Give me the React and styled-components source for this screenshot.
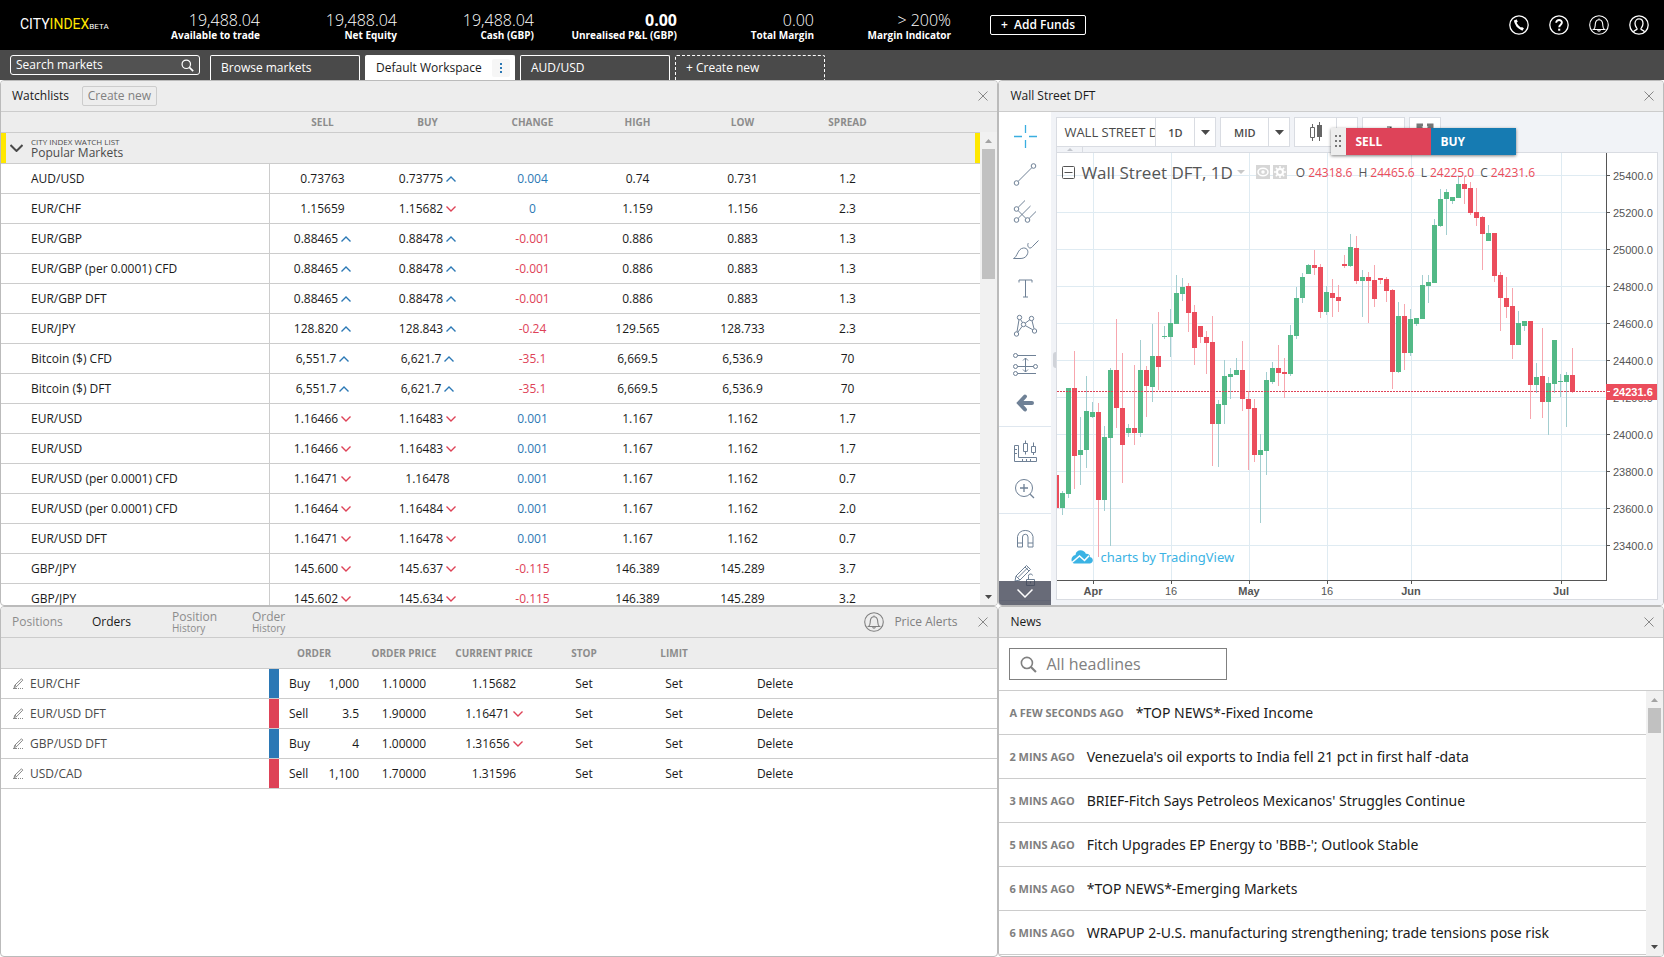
import React from "react";
import styled, { createGlobalStyle, css } from "styled-components";

const GlobalStyle = createGlobalStyle`
  * { box-sizing: border-box; }
  body {
    margin: 0;
    background: #fff;
    color: #1a1a1a;
    font-family: "Open Sans", "Noto Sans", sans-serif;
    font-size: 12px;
  }
  button, input { font: inherit; color: inherit; }
  button { padding: 0; border: 0; background: none; cursor: pointer; }
  a { color: inherit; text-decoration: none; }
`;

const line = "#ccc";
const blue = "#2b78b5";
const red = "#de4257";

/* ---------- page ---------- */

const Page = styled.div`
  display: flex;
  flex-direction: column;
  height: 100vh;
`;

const TopBar = styled.header`
  display: flex;
  flex: none;
  align-items: center;
  height: 50px;
  padding: 0 15px 0 20px;
  background: #000;
  color: #fff;
`;

const Logo = styled.a`
  flex: none;
  width: 103px;
  font-family: Roboto, sans-serif;
  font-size: 14px;
  line-height: 16px;
  color: #fff;
`;
const LogoAccent = styled.span`
  color: #ffe600;
`;
const LogoTag = styled.span`
  font-size: 8px;
`;

const Metrics = styled.dl`
  display: flex;
  margin: 0;
  padding-top: 2px;
`;
const Metric = styled.div`
  display: flex;
  flex-direction: column-reverse;
  width: ${(p) => (p.$wide ? 143 : 137)}px;
  text-align: right;
`;
const MetricLabel = styled.dt`
  font-size: 10px;
  font-weight: 700;
  line-height: 12px;
  white-space: nowrap;
`;
const MetricValue = styled.dd`
  margin: 0;
  font-size: 16px;
  font-weight: ${(p) => (p.$strong ? 700 : 300)};
  line-height: 18px;
`;

const AddFunds = styled.button`
  flex: none;
  width: 96px;
  height: 20px;
  margin-left: 39px;
  border: 1px solid #fff;
  border-radius: 2px;
  color: #fff;
  font-weight: 600;
  line-height: 18px;
`;

const AccountIcons = styled.nav`
  display: flex;
  gap: 20px;
  margin-left: auto;
`;
const RoundIcon = styled.button`
  display: block;
  width: 20px;
  height: 20px;
  color: #fff;
  svg { display: block; }
`;

/* ---------- workspace tabs ---------- */

const WorkspaceBar = styled.nav`
  display: flex;
  flex: none;
  align-items: flex-end;
  gap: 5px;
  height: 30px;
  padding-left: 10px;
  background: #4a4a4a;
  color: #fff;
`;
const MarketSearch = styled.label`
  display: flex;
  align-items: center;
  align-self: center;
  width: 190px;
  height: 20px;
  margin-right: 5px;
  padding: 0 5px;
  border: 1px solid #fff;
  border-radius: 3px;
  background: #525252;
`;
const MarketSearchInput = styled.input`
  flex: 1;
  min-width: 0;
  height: 18px;
  padding: 0 0 2px;
  border: 0;
  outline: 0;
  background: none;
  &::placeholder { color: #fff; opacity: 1; }
`;
const WorkspaceTab = styled.div`
  display: flex;
  align-items: center;
  justify-content: space-between;
  width: 150px;
  height: 25px;
  padding: 0 4px 1px 10px;
  border: 1px ${(p) => (p.$dashed ? "dashed" : "solid")} #fff;
  border-bottom: 0;
  border-radius: 2px 2px 0 0;
  ${(p) => p.$active && css`
    background: #fff;
    color: #1a1a1a;
  `}
`;
const TabMenu = styled.button`
  display: grid;
  place-items: center;
  width: 18px;
  height: 18px;
  border-radius: 2px;
  background: #f6f6f6;
  color: #2b78b5;
`;

/* ---------- panels ---------- */

const Workspace = styled.main`
  display: grid;
  flex: 1;
  grid-template-columns: minmax(0, 3fr) minmax(0, 2fr);
  grid-template-rows: minmax(0, 3fr) minmax(0, 2fr);
  min-height: 0;
`;
const Panel = styled.section`
  display: flex;
  flex-direction: column;
  min-width: 0;
  overflow: hidden;
  border: 1px solid #bbb;
  border-radius: 4px;
  background: #fff;
`;
const PanelHead = styled.div`
  display: flex;
  flex: none;
  align-items: center;
  height: 31px;
  padding: 0 9px 1px 11px;
  border-bottom: 1px solid ${line};
  background: #ededed;
`;
const PanelTitle = styled.h2`
  margin: 0;
  font-size: 12px;
  font-weight: 400;
`;
const CreateList = styled.button`
  width: 75px;
  height: 20px;
  margin-left: 13px;
  border: 1px solid #ccc;
  border-radius: 2px;
  color: #808080;
  line-height: 18px;
`;
const CloseButton = styled.button`
  display: grid;
  place-items: center;
  width: 10px;
  height: 10px;
  margin-left: ${(p) => (p.$tight ? "21px" : "auto")};
  color: #888;
`;
const PanelBody = styled.div`
  display: flex;
  flex: 1;
  min-height: 0;
`;
const TableArea = styled.div`
  flex: 1;
  min-width: 0;
  overflow: hidden;
`;

/* ---------- tables ---------- */

const DataTable = styled.table`
  width: 100%;
  table-layout: fixed;
  border-spacing: 0;
`;
const Col = styled.col`
  width: ${(p) => p.$w}px;
`;
const HeadCell = styled.th`
  height: ${(p) => p.$h || 21}px;
  padding: 0 ${(p) => p.$padRight || 0}px 0 0;
  border-bottom: 1px solid ${line};
  background: #ededed;
  color: #8c8c8c;
  font-size: 10px;
  font-weight: 700;
  text-align: center;
  white-space: nowrap;
`;
const Cell = styled.td`
  height: 30px;
  padding: 0;
  border-bottom: 1px solid ${line};
  text-align: center;
  white-space: nowrap;
  color: ${(p) => p.$color || "inherit"};
`;
const NameCell = styled(Cell).attrs({ as: "th", scope: "row" })`
  padding-left: ${(p) => p.$indent}px;
  border-right: ${(p) => (p.$divider ? `1px solid ${line}` : "0")};
  font-weight: 400;
  text-align: left;
`;
const Price = styled.span`
  display: inline-flex;
  align-items: center;
  gap: 3px;
`;
const GroupCell = styled.td`
  height: 31px;
  padding: 0;
  border-bottom: 1px solid ${line};
  background: #ededed;
`;
const GroupButton = styled.button`
  display: flex;
  align-items: center;
  gap: 8px;
  width: 100%;
  height: 30px;
  padding-left: 4px;
  border: solid #ffe800;
  border-width: 0 5px;
  color: #4a4a4a;
  text-align: left;
`;
const GroupText = styled.span`
  display: flex;
  flex-direction: column;
  line-height: 14px;
`;
const GroupKind = styled.small`
  font-size: 8px;
  line-height: 9px;
`;

/* ---------- scrollbar ---------- */

const ScrollTrack = styled.div`
  display: flex;
  flex: none;
  flex-direction: column;
  align-items: center;
  width: 17px;
  background: #f1f1f1;
`;
const ScrollCap = styled.div`
  flex: none;
  width: 17px;
  height: 20px;
  background: #ededed;
`;
const ScrollArrow = styled.div`
  display: grid;
  flex: none;
  place-items: center;
  width: 17px;
  height: 17px;
`;
const ScrollThumb = styled.div`
  flex: none;
  width: 13px;
  height: ${(p) => p.$h}px;
  margin-bottom: auto;
  background: #c1c1c1;
`;

/* ---------- orders ---------- */

const OrderTabs = styled.div`
  display: flex;
`;
const OrderTab = styled.button`
  display: flex;
  flex-direction: column;
  justify-content: center;
  width: 80px;
  height: 29px;
  color: ${(p) => (p.$active ? "#1a1a1a" : "#8c8c8c")};
  line-height: 13px;
  text-align: left;
`;
const TabSub = styled.small`
  font-size: 10px;
  line-height: 11px;
`;
const PriceAlerts = styled.button`
  display: flex;
  align-items: center;
  gap: 10px;
  margin-left: auto;
  color: #808080;
`;
const OrderName = styled.span`
  display: flex;
  align-items: center;
  gap: 6px;
  color: #4a4a4a;
`;
const SideCell = styled(Cell)`
  background: ${(p) => p.$bg};
`;
const OrderType = styled(Cell)`
  padding-left: 10px;
  text-align: left;
`;
const OrderSize = styled(Cell)`
  text-align: right;
`;

/* ---------- chart ---------- */

const ToolColumn = styled.div`
  position: relative;
  flex: none;
  width: 52px;
  overflow: hidden;
  background: #fff;
`;
const ToolGroup = styled.div`
  display: flex;
  flex-direction: column;
  align-items: center;
  padding: 5px 0;
  border-bottom: 1px solid #dfe7ef;
`;
const Tool = styled.button`
  display: grid;
  place-items: center;
  width: 38px;
  height: 38px;
  color: ${(p) => (p.$active ? "#3aaee0" : "#6f8196")};
`;
const ToolMore = styled.button`
  position: absolute;
  right: 0;
  bottom: 0;
  left: 0;
  display: grid;
  place-items: center;
  height: 24px;
  background: rgba(66, 70, 86, 0.8);
  color: #fff;
`;
const ChartArea = styled.div`
  position: relative;
  display: flex;
  flex: 1;
  flex-direction: column;
  min-width: 0;
  padding: 5px;
  background: #f1f3f7;
`;
const ChartToolbar = styled.div`
  display: flex;
  flex: none;
  gap: 4px;
`;
const ToolbarGroup = styled.div`
  display: flex;
  height: 30px;
  border: 1px solid #d9dce2;
  background: #fff;
  color: #4a4a4a;
`;
const SymbolInput = styled.input`
  width: 98px;
  padding: 0 0 0 7px;
  border: 0;
  outline: 0;
  background: none;
  font-size: 13px;
`;
const ToolbarButton = styled.button`
  display: grid;
  place-items: center;
  width: ${(p) => p.$w}px;
  border-left: ${(p) => (p.$divider ? "1px solid #d9dce2" : "0")};
  font-size: 11px;
  font-weight: 600;
`;
const ToolbarFold = styled.button`
  display: grid;
  flex: none;
  place-items: center;
  width: 27px;
  height: 5px;
  border: solid #d9dce2;
  border-width: 0 1px;
`;
const TradeTicket = styled.div`
  position: absolute;
  top: 16px;
  left: 280px;
  display: flex;
  width: 185px;
  height: 27px;
  background: #ededed;
  box-shadow: 0 1px 3px rgba(0, 0, 0, 0.5);
`;
const DragHandle = styled.div`
  display: grid;
  place-items: center;
  width: 15px;
`;
const TradeButton = styled.button`
  flex: 1;
  padding-left: 9px;
  background: ${(p) => p.$bg};
  color: #fff;
  font-weight: 700;
  text-align: left;
`;
const ChartBox = styled.div`
  position: relative;
  flex: 1;
  min-height: 0;
  overflow: hidden;
  border: 1px solid #d9dce2;
  background: #fff;
`;
const ChartSvg = styled.svg`
  display: block;
  width: 100%;
  height: 100%;
  text {
    font-family: "Liberation Sans", Arial, sans-serif;
    font-size: 11px;
    fill: #555;
  }
`;
const LastPrice = styled.text`
  && { fill: #fff; }
`;
const Legend = styled.div`
  position: absolute;
  top: 7px;
  left: 5px;
  display: flex;
  align-items: center;
  height: 24px;
  color: #555;
`;
const LegendTitle = styled.button`
  display: flex;
  align-items: center;
  gap: 4px;
  margin: 0 11px 0 6px;
  font-size: 17px;
  font-weight: 500;
  white-space: nowrap;
`;
const LegendIcon = styled.button`
  display: grid;
  place-items: center;
  width: 14px;
  height: 14px;
  margin-right: 3px;
  background: #d6d6d6;
  color: #fff;
`;
const Ohlc = styled.dl`
  display: flex;
  gap: 6px;
  margin: 0 0 0 6px;
`;
const OhlcItem = styled.div`
  display: flex;
  gap: 3px;
  dt, dd { margin: 0; }
  dd { color: #eb4d5c; }
`;
const Credit = styled.a`
  position: absolute;
  top: 393px;
  left: 14px;
  display: flex;
  align-items: center;
  gap: 7px;
  height: 22px;
  color: #3bb3e4;
  font-family: "Noto Sans", "Open Sans", sans-serif;
  font-size: 13px;
`;
const SideHandle = styled.div`
  position: absolute;
  top: 240px;
  left: 2px;
  width: 3px;
  height: 16px;
  border-radius: 8px 0 0 8px;
  background: #d0d3d9;
`;

/* ---------- news ---------- */

const NewsSearchBar = styled.div`
  flex: none;
  height: 53px;
  padding: 10px;
  border-bottom: 1px solid ${line};
`;
const NewsSearch = styled.label`
  display: flex;
  align-items: center;
  gap: 9px;
  width: 218px;
  height: 32px;
  padding-left: 10px;
  border: 1px solid #808080;
  color: #808080;
`;
const NewsInput = styled.input`
  flex: 1;
  min-width: 0;
  padding: 0;
  border: 0;
  outline: 0;
  font-size: 16px;
  &::placeholder { color: #808080; opacity: 1; }
`;
const NewsList = styled.ul`
  flex: 1;
  min-width: 0;
  margin: 0;
  padding: 0;
  overflow: hidden;
  list-style: none;
`;
const NewsItem = styled.li`
  display: flex;
  align-items: center;
  gap: 12px;
  height: 44px;
  padding-left: 10px;
  border-bottom: 1px solid ${line};
  white-space: nowrap;
`;
const NewsTime = styled.time`
  color: #808080;
  font-size: 11px;
  font-weight: 700;
`;
const NewsLink = styled.a`
  font-family: "Noto Sans", "Open Sans", sans-serif;
  font-size: 14px;
`;

/* ---------- data ---------- */

const metrics = [
  ["19,488.04", "Available to trade"],
  ["19,488.04", "Net Equity"],
  ["19,488.04", "Cash (GBP)"],
  ["0.00", "Unrealised P&L (GBP)", true],
  ["0.00", "Total Margin"],
  ["> 200%", "Margin Indicator"],
];

const markets = [
  ["AUD/USD", "0.73763", "", "0.73775", "u", "0.004", "0.74", "0.731", "1.2"],
  ["EUR/CHF", "1.15659", "", "1.15682", "d", "0", "1.159", "1.156", "2.3"],
  ["EUR/GBP", "0.88465", "u", "0.88478", "u", "-0.001", "0.886", "0.883", "1.3"],
  ["EUR/GBP (per 0.0001) CFD", "0.88465", "u", "0.88478", "u", "-0.001", "0.886", "0.883", "1.3"],
  ["EUR/GBP DFT", "0.88465", "u", "0.88478", "u", "-0.001", "0.886", "0.883", "1.3"],
  ["EUR/JPY", "128.820", "u", "128.843", "u", "-0.24", "129.565", "128.733", "2.3"],
  ["Bitcoin ($) CFD", "6,551.7", "u", "6,621.7", "u", "-35.1", "6,669.5", "6,536.9", "70"],
  ["Bitcoin ($) DFT", "6,551.7", "u", "6,621.7", "u", "-35.1", "6,669.5", "6,536.9", "70"],
  ["EUR/USD", "1.16466", "d", "1.16483", "d", "0.001", "1.167", "1.162", "1.7"],
  ["EUR/USD", "1.16466", "d", "1.16483", "d", "0.001", "1.167", "1.162", "1.7"],
  ["EUR/USD (per 0.0001) CFD", "1.16471", "d", "1.16478", "", "0.001", "1.167", "1.162", "0.7"],
  ["EUR/USD (per 0.0001) CFD", "1.16464", "d", "1.16484", "d", "0.001", "1.167", "1.162", "2.0"],
  ["EUR/USD DFT", "1.16471", "d", "1.16478", "d", "0.001", "1.167", "1.162", "0.7"],
  ["GBP/JPY", "145.600", "d", "145.637", "d", "-0.115", "146.389", "145.289", "3.7"],
  ["GBP/JPY", "145.602", "d", "145.634", "d", "-0.115", "146.389", "145.289", "3.2"],
];

const orders = [
  ["EUR/CHF", "Buy", "1,000", "1.10000", "1.15682", ""],
  ["EUR/USD DFT", "Sell", "3.5", "1.90000", "1.16471", "d"],
  ["GBP/USD DFT", "Buy", "4", "1.00000", "1.31656", "d"],
  ["USD/CAD", "Sell", "1,100", "1.70000", "1.31596", ""],
];

const news = [
  ["A FEW SECONDS AGO", "*TOP NEWS*-Fixed Income"],
  ["2 MINS AGO", "Venezuela's oil exports to India fell 21 pct in first half -data"],
  ["3 MINS AGO", "BRIEF-Fitch Says Petroleos Mexicanos' Struggles Continue"],
  ["5 MINS AGO", "Fitch Upgrades EP Energy to 'BBB-'; Outlook Stable"],
  ["6 MINS AGO", "*TOP NEWS*-Emerging Markets"],
  ["6 MINS AGO", "WRAPUP 2-U.S. manufacturing strengthening; trade tensions pose risk"],
];

/* One candle per trading day: direction, high, body top, body bottom, low. */
const candles = [
  ["r", 475, 475, 508, 508], ["g", 491, 493, 508, 515], ["g", 388, 388, 494, 498],
  ["r", 351, 388, 456, 489], ["g", 417, 450, 455, 485], ["g", 376, 411, 450, 468],
  ["g", 402, 412, 417, 418], ["r", 403, 412, 500, 557], ["g", 426, 437, 500, 511],
  ["g", 368, 370, 438, 546], ["r", 319, 370, 408, 428], ["r", 353, 408, 445, 483],
  ["g", 424, 428, 433, 437], ["r", 365, 428, 433, 445], ["g", 340, 370, 433, 437],
  ["r", 366, 370, 386, 417], ["g", 324, 356, 387, 402], ["r", 312, 356, 367, 390],
  ["g", 326, 336, 337, 339], ["g", 309, 323, 337, 357], ["g", 275, 293, 324, 324],
  ["g", 278, 287, 294, 301], ["r", 283, 286, 313, 332], ["r", 305, 312, 348, 365],
  ["r", 326, 326, 337, 343], ["r", 331, 337, 343, 374], ["r", 316, 342, 424, 466],
  ["g", 400, 404, 424, 467], ["g", 360, 376, 405, 424], ["g", 368, 374, 377, 399],
  ["g", 358, 370, 375, 375], ["r", 341, 370, 399, 411], ["r", 391, 399, 409, 470],
  ["r", 399, 408, 455, 462], ["g", 434, 450, 455, 523], ["g", 372, 380, 451, 475],
  ["g", 362, 368, 382, 384], ["r", 345, 368, 373, 386], ["r", 358, 372, 374, 398],
  ["g", 325, 335, 374, 376], ["g", 287, 298, 336, 339], ["g", 273, 277, 298, 303],
  ["g", 264, 265, 274, 274], ["r", 250, 265, 268, 275], ["r", 264, 267, 312, 318],
  ["g", 286, 292, 312, 315], ["r", 279, 293, 298, 317], ["r", 285, 297, 301, 312],
  ["r", 255, 264, 266, 268], ["g", 234, 247, 266, 267], ["r", 236, 248, 281, 284],
  ["g", 270, 277, 281, 317], ["r", 272, 277, 281, 323], ["r", 265, 280, 299, 307],
  ["r", 278, 278, 280, 284], ["r", 277, 279, 291, 302], ["r", 289, 290, 372, 389],
  ["g", 302, 316, 372, 373], ["r", 304, 316, 353, 370], ["g", 309, 319, 353, 356],
  ["g", 318, 318, 324, 326], ["g", 275, 285, 319, 319], ["g", 275, 282, 286, 303],
  ["g", 219, 225, 283, 283], ["g", 189, 199, 226, 227], ["g", 189, 192, 199, 235],
  ["g", 197, 197, 201, 204], ["g", 176, 184, 198, 198], ["r", 176, 184, 189, 204],
  ["r", 182, 188, 213, 215], ["r", 188, 212, 218, 226], ["r", 216, 217, 234, 270],
  ["g", 225, 233, 241, 241], ["r", 233, 233, 276, 282], ["r", 272, 275, 298, 331],
  ["r", 277, 298, 307, 318], ["r", 288, 306, 345, 359], ["g", 311, 323, 345, 345],
  ["g", 321, 321, 326, 331], ["r", 321, 321, 385, 419], ["g", 363, 377, 385, 393],
  ["r", 328, 376, 402, 418], ["g", 377, 383, 402, 435], ["g", 340, 340, 384, 393],
  ["g", 374, 381, 382, 397], ["g", 372, 375, 382, 427], ["r", 348, 375, 392, 393],
];
const CHART_TOP = 153;

const dates = [
  [36, "Apr", true], [114, "16"], [192, "May", true],
  [270, "16"], [354, "Jun", true], [504, "Jul", true],
];
const prices = Array.from({ length: 11 }, (_, i) => (25400 - i * 200).toFixed(1));

/* ---------- icons ---------- */

const Icon = ({ w, h = w, box, sw = 1, children, ...rest }) => (
  <svg width={w} height={h} viewBox={box || `0 0 ${w} ${h}`} fill="none" stroke="currentColor" strokeWidth={sw} aria-hidden="true" {...rest}>
    {children}
  </svg>
);

const Arrow = ({ dir }) =>
  dir ? (
    <Icon w={10} h={6} sw={1.4} color={dir === "u" ? blue : red}>
      <path d={dir === "u" ? "M.5 5.5 5 1l4.5 4.5" : "M.5.5 5 5 9.5.5"} />
    </Icon>
  ) : null;

const CloseIcon = () => (
  <Icon w={10}><path d="M.5.5l9 9M9.5.5l-9 9" /></Icon>
);

const SearchIcon = ({ size }) => (
  <Icon w={size} box="0 0 16 16" sw={1.5}>
    <circle cx="6.5" cy="6.5" r="5.2" />
    <path d="M10.3 10.3 15 15" strokeWidth="2" />
  </Icon>
);

const BellIcon = () => (
  <Icon w={20} sw={1.1}>
    <circle cx="10" cy="10" r="9.3" />
    <path d="M4.5 14.5c2-1.5 1.6-3 1.8-5.5.2-2.6 1.5-4.3 3.7-4.3s3.5 1.700 3.700 4.300c.2 2.500-.2 4 1.800 5.500zM8.700 15c.2 1.500 2.400 1.500 2.600 0M10 3.500v1" />
  </Icon>
);

const Triangle = ({ up, w = 9, h = 5, color }) => (
  <svg width={w} height={h} viewBox="0 0 10 6" preserveAspectRatio="none" aria-hidden="true">
    <path d={up ? "M0 6 5 0l5 6z" : "M0 0h10L5 6z"} fill={color} />
  </svg>
);

const EditIcon = () => (
  <Icon w={11} h={11} color="#888" sw={1}>
    <path d="M1 9.5 2 7 8.5.8l1.300 1.300L3.500 8.700zM2 7l1.500 1.700" />
    <path d="M0 10.500h10" strokeDasharray="4 1 1 1 1 1" />
  </Icon>
);

const tools = {
  Crosshair: <path d="M12.500 1v8M12.500 16v8M1 12.500h8M16 12.500h8" strokeWidth="1.300" />,
  "Trend line": <><circle cx="3.500" cy="21" r="2.300" /><circle cx="20.500" cy="4" r="2.300" /><path d="M5.200 19.300 18.800 5.700" /></>,
  Pitchfork: <><circle cx="3.500" cy="9" r="2.300" /><circle cx="3.500" cy="20" r="2.300" /><circle cx="14.500" cy="20" r="2.300" /><path d="M5.200 7.300 12 .5M5.200 18.300 17.500 6M16.200 18.300 23 11.500M5.200 10.700l7.600 7.600" /></>,
  Brush: <><path d="M.5 20.500c4-1.500 4-10 10-10.500 4-.2 5.500 3.500 3.500 7-1.500 3-4.500 3.500-7 3.500z" /><path d="M15.500 5c-1.500 1.500-.5 5 1.500 5 1.500 0 2-1 3-2l5.500-5.500" /></>,
  Text: <path d="M6 6.500V4h13v2.500M12.500 4v17M10 21h5" />,
  Patterns: <><circle cx="6.500" cy="3.500" r="2.200" /><circle cx="18.500" cy="4.500" r="2.200" /><circle cx="10.500" cy="10.500" r="2.200" /><circle cx="3.500" cy="20" r="2.200" /><circle cx="21.500" cy="17" r="2.200" /><path d="M6 5.700 4 17.800M7.500 5.500l2 3M12.200 9.200l4.700-3.500M9.200 12.300l-4.400 6M12.500 11.700l7.200 4M19 6.700l2 8" /></>,
  "Forecast range": <><circle cx="2.500" cy="3.500" r="2" /><circle cx="2.500" cy="14.500" r="2" /><circle cx="22.500" cy="14.500" r="2" /><circle cx="2.500" cy="21.500" r="2" /><path d="M4.500 3.500H23M4.500 14.500h16M4.500 21.500H23M12.500 6v14M10 8.500 12.500 6 15 8.500M10 17.500l2.500 2.500 2.500-2.500" /></>,
  Back: <path d="M12 6.500 6 13l6 6.500M6.500 13h12.500" strokeWidth="4" strokeLinecap="round" />,
  Measure: <><path d="M1.500 6.500h4v12h18v4h-22zM1.500 10.500H4M1.500 14.500H4M9.500 20v2M13.500 20v2M17.500 20v2M10.500 4.500h4v8h-4zM12.500 1.500v3M12.500 12.500v3M18.500 7.500h4v6h-4zM20.500 3.500v4M20.500 13.500V16" /></>,
  Zoom: <><circle cx="11" cy="11" r="8.500" /><path d="M17.200 17.200 21 21M7 11h8M11 7v8" strokeWidth="1.300" /></>,
  Magnet: <path d="M4.500 21V10.500a8 8 0 0 1 15.500 0V21h-5V11a2.700 2.700 0 0 0-5.500 0v10zM4.500 17h5M15 17h5" />,
  "Lock drawings": <><path d="m2 17 1-5L13.500 1.500l4 4L7 16zM3 12l4 4M5 13.500 15 3.500M12 3l4 4" /><path d="M13.500 15.500h8v6h-8zM15.500 15.500v-3a2 2 0 0 1 4-1M17.500 17.500v2" /></>,
};
const toolGroups = [
  ["Crosshair", "Trend line", "Pitchfork", "Brush", "Text", "Patterns", "Forecast range", "Back"],
  ["Measure", "Zoom"],
  ["Magnet", "Lock drawings"],
];

const Scrollbar = ({ cap, thumb }) => (
  <ScrollTrack aria-hidden="true">
    {cap && <ScrollCap />}
    <ScrollArrow><Triangle up w={7} h={4} color="#a3a3a3" /></ScrollArrow>
    <ScrollThumb $h={thumb} />
    <ScrollArrow><Triangle w={7} h={4} color="#4a4a4a" /></ScrollArrow>
  </ScrollTrack>
);

/* ---------- sections ---------- */

function Header() {
  return (
    <TopBar>
      <Logo href="#">CITY<LogoAccent>INDEX</LogoAccent><LogoTag>BETA</LogoTag></Logo>
      <Metrics>
        {metrics.map(([value, label, strong]) => (
          <Metric key={label} $wide={strong}>
            <MetricLabel>{label}</MetricLabel>
            <MetricValue $strong={strong}>{value}</MetricValue>
          </Metric>
        ))}
      </Metrics>
      <AddFunds>+&nbsp; Add Funds</AddFunds>
      <AccountIcons>
        <RoundIcon aria-label="Call us">
          <Icon w={20} sw={1.3}>
            <circle cx="10" cy="10" r="9.2" />
            <path d="M6.500 5.500c-.8 3.500 3.500 8.300 7.300 8.500" strokeWidth="2.200" />
            <path d="M6.200 5l1.300 2.500M12 13.200l2.200 1.300" strokeWidth="3" />
          </Icon>
        </RoundIcon>
        <RoundIcon aria-label="Help">
          <Icon w={20} sw={1.3}>
            <circle cx="10" cy="10" r="9.2" />
            <path d="M7.200 7.800c0-3.800 5.800-3.500 5.700-.2 0 2-2.700 2.200-2.700 4.600" strokeWidth="1.900" />
            <path d="M10.200 13.700v2" strokeWidth="2.100" />
          </Icon>
        </RoundIcon>
        <RoundIcon aria-label="Notifications"><BellIcon /></RoundIcon>
        <RoundIcon aria-label="Account">
          <Icon w={20} sw={1.3}>
            <circle cx="10" cy="10" r="9.2" />
            <path d="M4.500 16.800c.5-1.500 3.300-1.800 3.600-2.800.2-.8-2.100-2.200-2.100-5.400 0-6.200 8-6.200 8 0 0 3.200-2.300 4.600-2.100 5.400.3 1 3.100 1.300 3.600 2.800" />
          </Icon>
        </RoundIcon>
      </AccountIcons>
    </TopBar>
  );
}

function Tabs() {
  return (
    <WorkspaceBar>
      <MarketSearch>
        <MarketSearchInput placeholder="Search markets" aria-label="Search markets" />
        <SearchIcon size={13} />
      </MarketSearch>
      <WorkspaceTab as="a" href="#">Browse markets</WorkspaceTab>
      <WorkspaceTab $active>
        <a href="#">Default Workspace</a>
        <TabMenu aria-label="Workspace menu">
          <svg width="2" height="10" fill="currentColor"><path d="M0 0h2v2H0zM0 4h2v2H0zM0 8h2v2H0z" /></svg>
        </TabMenu>
      </WorkspaceTab>
      <WorkspaceTab as="a" href="#">AUD/USD</WorkspaceTab>
      <WorkspaceTab as="a" href="#" $dashed>+ Create new</WorkspaceTab>
    </WorkspaceBar>
  );
}

function Watchlists() {
  return (
    <Panel>
      <PanelHead>
        <PanelTitle>Watchlists</PanelTitle>
        <CreateList>Create new</CreateList>
        <CloseButton aria-label="Close Watchlists"><CloseIcon /></CloseButton>
      </PanelHead>
      <PanelBody>
        <TableArea>
          <DataTable>
            <colgroup>
              <Col $w={269} />
              {[1, 2, 3, 4, 5, 6].map((n) => <Col key={n} $w={105} />)}
              <col />
            </colgroup>
            <thead>
              <tr>
                {["", "SELL", "BUY", "CHANGE", "HIGH", "LOW", "SPREAD", ""].map((t, i) => (
                  <HeadCell key={i}>{t}</HeadCell>
                ))}
              </tr>
            </thead>
            <tbody>
              <tr>
                <GroupCell colSpan={8}>
                  <GroupButton>
                    <Icon w={13} h={8} sw={2}><path d="M.5 1l6 6 6-6" /></Icon>
                    <GroupText><GroupKind>CITY INDEX WATCH LIST</GroupKind>Popular Markets</GroupText>
                  </GroupButton>
                </GroupCell>
              </tr>
              {markets.map(([name, sell, sd, buy, bd, change, high, low, spread], i) => (
                <tr key={i}>
                  <NameCell $indent={30} $divider>{name}</NameCell>
                  <Cell><Price>{sell}<Arrow dir={sd} /></Price></Cell>
                  <Cell><Price>{buy}<Arrow dir={bd} /></Price></Cell>
                  <Cell $color={change.startsWith("-") ? red : blue}>{change}</Cell>
                  <Cell>{high}</Cell>
                  <Cell>{low}</Cell>
                  <Cell>{spread}</Cell>
                  <Cell />
                </tr>
              ))}
            </tbody>
          </DataTable>
        </TableArea>
        <Scrollbar cap thumb={130} />
      </PanelBody>
    </Panel>
  );
}

function Chart() {
  return (
    <ChartSvg role="img" aria-label="Wall Street DFT daily candles">
      <g stroke="#dfebf2" shapeRendering="crispEdges">
        {dates.map(([x]) => <path key={x} d={`M${x + 0.5} 0V427`} />)}
        {prices.map((p, i) => <path key={p} d={`M0 ${22.5 + i * 37}H549`} />)}
      </g>
      <g shapeRendering="crispEdges">
        {candles.map(([c, high, top, bottom, low], i) => {
          const x = i * 6 - 1;
          return (
            <g key={i}>
              <rect x={x} y={high - CHART_TOP} width="1" height={low - high} fill={c === "g" ? "#a3ced0" : "#f7a6ae"} />
              <rect x={x - 2} y={top - CHART_TOP} width="5" height={bottom - top} fill={c === "g" ? "#53b987" : "#eb4d5c"} />
            </g>
          );
        })}
      </g>
      <path d="M0 238.500H549" stroke={red} strokeDasharray="2 1" shapeRendering="crispEdges" />
      <path d="M549.500 0V427.500M0 427.500H550" stroke="#555" shapeRendering="crispEdges" />
      {dates.map(([x, label, bold]) => (
        <g key={x}>
          <path d={`M${x + 0.5} 428v3`} stroke="#555" shapeRendering="crispEdges" />
          <text x={x} y="442" textAnchor="middle" fontWeight={bold ? 700 : 400}>{label}</text>
        </g>
      ))}
      {prices.map((p, i) => (
        <g key={p}>
          <path d={`M550 ${22.5 + i * 37}h3`} stroke="#555" shapeRendering="crispEdges" />
          <text x="556" y={27 + i * 37}>{p}</text>
        </g>
      ))}
      <rect x="549" y="231" width="51" height="16" fill="#eb4d5c" />
      <path d="M550 238.500h3" stroke="#fff" />
      <LastPrice x="556" y="243" fontWeight="700">24231.6</LastPrice>
    </ChartSvg>
  );
}

function ChartPanel() {
  return (
    <Panel>
      <PanelHead>
        <PanelTitle>Wall Street DFT</PanelTitle>
        <CloseButton aria-label="Close chart"><CloseIcon /></CloseButton>
      </PanelHead>
      <PanelBody>
        <ToolColumn>
          {toolGroups.map((names) => (
            <ToolGroup key={names[0]}>
              {names.map((n) => (
                <Tool key={n} aria-label={n} $active={n === "Crosshair"}>
                  <Icon w={25} overflow="visible">{tools[n]}</Icon>
                </Tool>
              ))}
            </ToolGroup>
          ))}
          <ToolMore aria-label="More tools">
            <Icon w={16} h={9} sw={1.5}><path d="M.5.5 8 8 15.500.5" /></Icon>
          </ToolMore>
        </ToolColumn>
        <ChartArea>
          <ChartToolbar>
            <ToolbarGroup>
              <SymbolInput defaultValue="WALL STREET DFT" aria-label="Symbol" />
              <ToolbarButton $w={39} $divider>1D</ToolbarButton>
              <ToolbarButton $w={21} $divider aria-label="Change interval"><Triangle color="#4a4a4a" /></ToolbarButton>
            </ToolbarGroup>
            <ToolbarGroup>
              <ToolbarButton $w={47}>MID</ToolbarButton>
              <ToolbarButton $w={21} $divider aria-label="Change price type"><Triangle color="#4a4a4a" /></ToolbarButton>
            </ToolbarGroup>
            <ToolbarGroup>
              <ToolbarButton $w={41} aria-label="Chart style">
                <Icon w={14} h={20} color="#666"><path d="M1.500 5.500h4v10h-4zM3.500 2v3.500M3.500 15.500V19M10.500 0v19" /><path d="M8 3h5v12H8z" fill="currentColor" stroke="none" /></Icon>
              </ToolbarButton>
              <ToolbarButton $w={21} $divider aria-label="Change chart style" />
            </ToolbarGroup>
            <ToolbarGroup>
              <ToolbarButton $w={41} aria-label="Indicators">
                <Icon w={20} h={14} sw={1.2}><path d="M1 13 7 7l4 4 6-9M13 2h4v4" /></Icon>
              </ToolbarButton>
            </ToolbarGroup>
            <ToolbarGroup>
              <ToolbarButton $w={30} aria-label="Full screen">
                <Icon w={18} h={18} sw={3} color="#777"><path d="M2 7V2h5M11 2h5v5M16 11v5h-5M7 16H2v-5M2 2l4 4M16 2l-4 4M2 16l4-4M16 16l-4-4" /></Icon>
              </ToolbarButton>
            </ToolbarGroup>
          </ChartToolbar>
          <ToolbarFold aria-label="Hide toolbar"><Triangle up w={6} h={3} color="#c4c7ce" /></ToolbarFold>
          <ChartBox>
            <Chart />
            <Legend>
              <Icon w={13}><rect x=".5" y=".5" width="12" height="12" rx="1" /><path d="M2.500 6.500h8" /></Icon>
              <LegendTitle>Wall Street DFT, 1D<Triangle w={8} h={4} color="#c8c8c8" /></LegendTitle>
              <LegendIcon aria-label="Hide series">
                <Icon w={12} h={10} sw={1.5}><ellipse cx="6" cy="5" rx="5" ry="3.800" /><circle cx="6" cy="5" r="1" /></Icon>
              </LegendIcon>
              <LegendIcon aria-label="Series settings">
                <Icon w={12} sw={2}><circle cx="6" cy="6" r="3" /><path d="M6 0v2.500M6 9.500V12M0 6h2.500M9.500 6H12M1.800 1.800l1.700 1.700M8.500 8.500l1.700 1.700M10.200 1.800 8.500 3.500M3.500 8.500l-1.700 1.700" strokeWidth="1.500" /></Icon>
              </LegendIcon>
              <Ohlc>
                {[["O", "24318.6"], ["H", "24465.6"], ["L", "24225.0"], ["C", "24231.6"]].map(([k, v]) => (
                  <OhlcItem key={k}><dt>{k}</dt><dd>{v}</dd></OhlcItem>
                ))}
              </Ohlc>
            </Legend>
            <Credit href="#">
              <Icon w={22} h={14} stroke="none">
                <path d="M3 13.500h16c4-.5 3.500-6 .2-6.300C19 4 16 3.500 15 4 13-1 5-1 4.500 5 0 5.500-1 12 3 13.500z" fill="currentColor" />
                <path d="M1 12.500 8.500 6l5 4.500 4.500-4.800" stroke="#fff" strokeWidth="1.600" />
              </Icon>
              charts by TradingView
            </Credit>
          </ChartBox>
          <SideHandle />
          <TradeTicket>
            <DragHandle>
              <svg width="7" height="13" fill="#777"><path d="M0 0h2v2H0zM4 0h2v2H4zM0 5h2v2H0zM4 5h2v2H4zM0 10h2v2H0zM4 10h2v2H4z" /></svg>
            </DragHandle>
            <TradeButton $bg="#de4359">SELL</TradeButton>
            <TradeButton $bg="#167bb2">BUY</TradeButton>
          </TradeTicket>
        </ChartArea>
      </PanelBody>
    </Panel>
  );
}

function Orders() {
  return (
    <Panel>
      <PanelHead>
        <OrderTabs>
          <OrderTab>Positions</OrderTab>
          <OrderTab $active>Orders</OrderTab>
          <OrderTab>Position<TabSub>History</TabSub></OrderTab>
          <OrderTab>Order<TabSub>History</TabSub></OrderTab>
        </OrderTabs>
        <PriceAlerts><BellIcon />Price Alerts</PriceAlerts>
        <CloseButton $tight aria-label="Close orders"><CloseIcon /></CloseButton>
      </PanelHead>
      <DataTable>
        <colgroup>
          {[268, 10, 35, 45, 90, 90, 90, 90, 112].map((w, i) => <Col key={i} $w={w} />)}
          <col />
        </colgroup>
        <thead>
          <tr>
            <HeadCell $h={31} colSpan={2} />
            <HeadCell $h={31} $padRight={10} colSpan={2}>ORDER</HeadCell>
            {["ORDER PRICE", "CURRENT PRICE", "STOP", "LIMIT", "", ""].map((t, i) => (
              <HeadCell key={i} $h={31}>{t}</HeadCell>
            ))}
          </tr>
        </thead>
        <tbody>
          {orders.map(([name, side, size, price, current, dir]) => (
            <tr key={name}>
              <NameCell $indent={12}><OrderName><EditIcon />{name}</OrderName></NameCell>
              <SideCell $bg={side === "Buy" ? blue : red} />
              <OrderType>{side}</OrderType>
              <OrderSize>{size}</OrderSize>
              <Cell>{price}</Cell>
              <Cell><Price>{current}<Arrow dir={dir} /></Price></Cell>
              <Cell><button>Set</button></Cell>
              <Cell><button>Set</button></Cell>
              <Cell><button>Delete</button></Cell>
              <Cell />
            </tr>
          ))}
        </tbody>
      </DataTable>
    </Panel>
  );
}

function News() {
  return (
    <Panel>
      <PanelHead>
        <PanelTitle>News</PanelTitle>
        <CloseButton aria-label="Close news"><CloseIcon /></CloseButton>
      </PanelHead>
      <NewsSearchBar>
        <NewsSearch>
          <SearchIcon size={17} />
          <NewsInput placeholder="All headlines" aria-label="All headlines" />
        </NewsSearch>
      </NewsSearchBar>
      <PanelBody>
        <NewsList>
          {news.map(([time, title]) => (
            <NewsItem key={title}>
              <NewsTime>{time}</NewsTime>
              <NewsLink href="#">{title}</NewsLink>
            </NewsItem>
          ))}
        </NewsList>
        <Scrollbar thumb={25} />
      </PanelBody>
    </Panel>
  );
}

export default function App() {
  return (
    <Page>
      <GlobalStyle />
      <Header />
      <Tabs />
      <Workspace>
        <Watchlists />
        <ChartPanel />
        <Orders />
        <News />
      </Workspace>
    </Page>
  );
}
